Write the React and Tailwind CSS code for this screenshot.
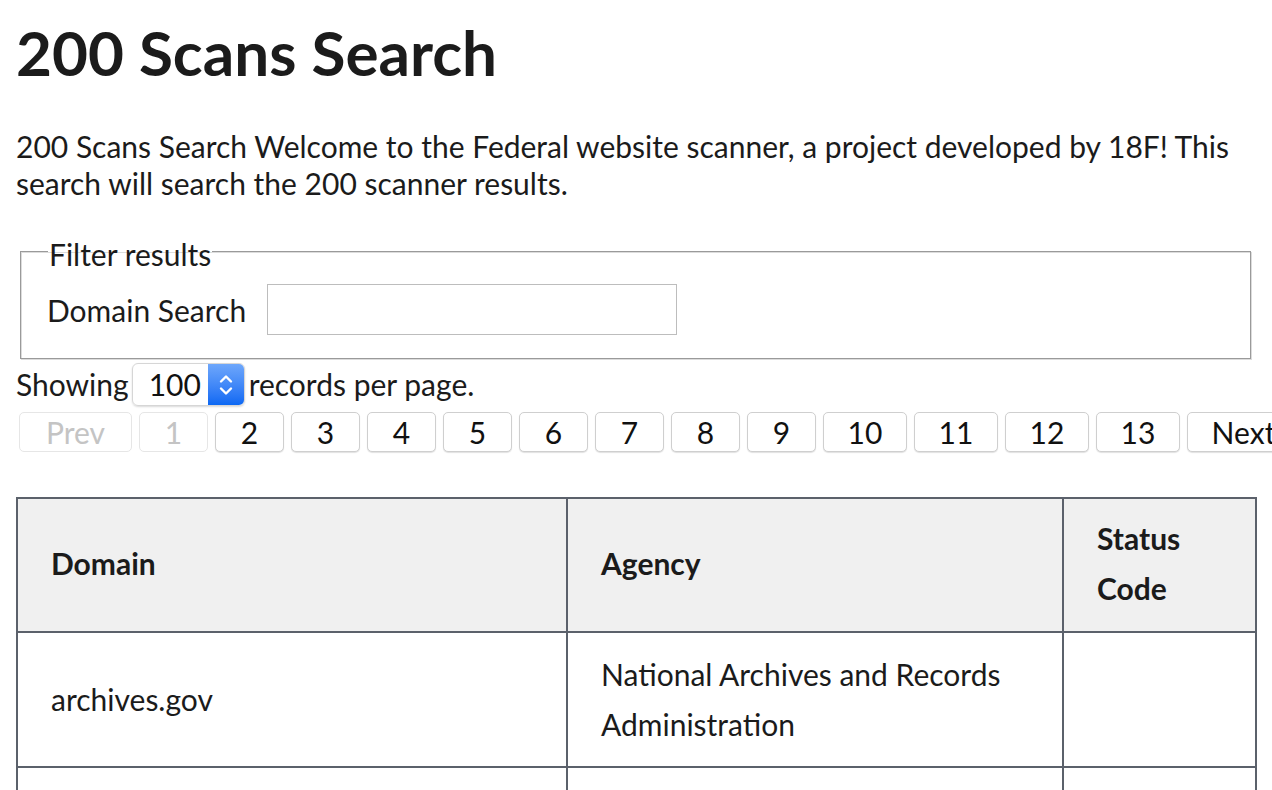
import React from 'react';

const pages = ['2', '3', '4', '5', '6', '7', '8', '9', '10', '11', '12', '13'];

function PageButton({ label, disabled }) {
  const wide = label.length > 1 && label !== 'Prev' && label !== 'Next';
  const base = label === 'Prev' || label === 'Next' ? 'w-[113px]' : wide ? 'w-[84px]' : 'w-[69px]';
  return (
    <button
      className={
        base +
        ' h-[40px] shrink-0 rounded-[5px] border text-center leading-[38px] ' +
        (disabled
          ? 'border-[#e6e6e6] text-[#c4c4c4] bg-white'
          : 'border-[#cfcfcf] text-[#111] bg-white shadow-[0_1px_1px_rgba(0,0,0,0.12)]')
      }
    >
      {label}
    </button>
  );
}

export default function App() {
  return (
    <div className="h-[790px] overflow-hidden bg-white px-4 text-[30px] text-[#1b1b1b] [font-family:Lato,sans-serif]">
      <h1 className="pt-[20px] text-[62px] font-bold leading-[64px]">200 Scans Search</h1>

      {/* intro */}
      <p className="mt-[44px] leading-[37px]">
        200 Scans Search Welcome to the Federal website scanner, a project developed by 18F! This
        <br />
        search will search the 200 scanner results.
      </p>

      {/* filter box */}
      <fieldset className="ml-1 mr-[5px] mt-[31px] border border-[#9a9a9a] pb-[23px] pl-[26px] pr-3 shadow-[inset_1px_1px_0_#dcdcdc,1px_1px_0_#dcdcdc]">
        <legend className="ml-[1px] px-[1px] pt-[6px] leading-[30px]">Filter results</legend>
        <div className="mt-[15px] flex items-center">
          <label className="leading-[40px]">Domain Search</label>
          <input className="ml-[21px] h-[51px] w-[410px] border border-[#bdbdbd] bg-white outline-none" />
        </div>
      </fieldset>

      {/* page size */}
      <div className="mt-[4px] flex h-[43px] items-center">
        <span>Showing</span>
        <div className="ml-[3px] flex h-[43px] w-[113px] items-stretch overflow-hidden rounded-[6px] border border-[#d6d6d6] shadow-[0_1px_2px_rgba(0,0,0,0.15)]">
          <span className="flex-1 pl-[16px] leading-[41px] text-[#111]">100</span>
          <span className="flex w-[36px] items-center justify-center bg-linear-to-b from-[#6ea7fb] to-[#0a68f3]">
            <svg width="16" height="26" viewBox="0 0 16 26" fill="none" stroke="white" strokeWidth="2.4" strokeLinecap="round" strokeLinejoin="round">
              <path d="M3 9.5 L8 4.5 L13 9.5" />
              <path d="M3 16.5 L8 21.5 L13 16.5" />
            </svg>
          </span>
        </div>
        <span className="ml-[4px]">records per page.</span>
      </div>

      {/* pagination */}
      <div className="mt-[6px] ml-[3px] flex gap-[7px]">
        <PageButton label="Prev" disabled />
        <PageButton label="1" disabled />
        {pages.map((p) => (
          <PageButton key={p} label={p} />
        ))}
        <PageButton label="Next" />
      </div>

      {/* results */}
      <table className="mt-[45px] w-[1239px] table-fixed border-collapse">
        <colgroup>
          <col className="w-[550px]" />
          <col className="w-[496px]" />
          <col className="w-[193px]" />
        </colgroup>
        <thead>
          <tr className="h-[134px] bg-[#f0f0f0]">
            <th className="border-2 border-[#5b616b] px-[33px] pb-[4px] text-left align-middle font-bold leading-[50px]">Domain</th>
            <th className="border-2 border-[#5b616b] px-[33px] pb-[4px] text-left align-middle font-bold leading-[50px]">Agency</th>
            <th className="border-2 border-[#5b616b] px-[33px] pb-[4px] text-left align-middle font-bold leading-[50px]">
              Status
              <br />
              Code
            </th>
          </tr>
        </thead>
        <tbody>
          <tr className="h-[135px]">
            <td className="border-2 border-[#5b616b] px-[33px] pb-[2px] align-middle leading-[50px]">archives.gov</td>
            <td className="border-2 border-[#5b616b] px-[33px] pb-[2px] align-middle leading-[50px]">
              National Archives and Records
              <br />
              Administration
            </td>
            <td className="border-2 border-[#5b616b] px-[33px] align-middle leading-[50px]"></td>
          </tr>
          <tr className="h-[135px]">
            <td className="border-2 border-[#5b616b]"></td>
            <td className="border-2 border-[#5b616b]"></td>
            <td className="border-2 border-[#5b616b]"></td>
          </tr>
        </tbody>
      </table>
    </div>
  );
}
